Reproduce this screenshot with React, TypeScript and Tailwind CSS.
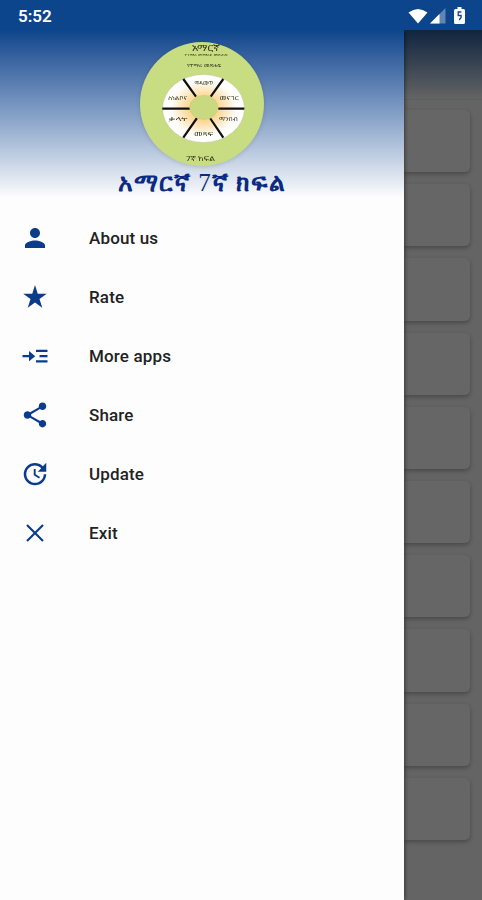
import React from "react";

const cards = Array.from({ length: 10 }, (_, index) => index);

const menuItems = [
  {
    label: "About us",
    icon: (
      <path d="M12 12c2.21 0 4-1.79 4-4s-1.79-4-4-4-4 1.79-4 4 1.79 4 4 4zm0 2c-2.67 0-8 1.34-8 4v2h16v-2c0-2.66-5.33-4-8-4z" />
    ),
  },
  {
    label: "Rate",
    icon: (
      <path d="M12 2.4l2.2 7h7.2l-5.8 4.2 2.2 7-5.8-4.3-5.8 4.3 2.2-7-5.8-4.2h7.2z" />
    ),
  },
  {
    label: "More apps",
    icon: (
      <path d="M2 11.2h5.2V8l5 4.1-5 4.1V13H2zM12.8 7H22v1.8h-9.2zM15.6 11.2H22V13h-6.4zM12.8 15.4H22v1.8h-9.2z" />
    ),
  },
  {
    label: "Share",
    icon: (
      <path d="M18 16.08c-.76 0-1.44.3-1.96.77L8.91 12.7c.05-.23.09-.46.09-.7s-.04-.47-.09-.7l7.05-4.11c.54.5 1.25.81 2.04.81 1.66 0 3-1.34 3-3s-1.34-3-3-3-3 1.34-3 3c0 .24.04.47.09.7L8.04 9.81C7.5 9.31 6.79 9 6 9c-1.66 0-3 1.34-3 3s1.34 3 3 3c.79 0 1.5-.31 2.04-.81l7.12 4.16c-.05.21-.08.43-.08.65 0 1.61 1.31 2.92 2.92 2.92s2.92-1.31 2.92-2.92-1.31-2.92-2.92-2.92z" />
    ),
  },
  {
    label: "Update",
    icon: (
      <path d="M21 10.12h-6.78l2.74-2.82c-2.73-2.7-7.15-2.8-9.88-.1-2.73 2.71-2.73 7.08 0 9.79s7.15 2.71 9.88 0C18.32 15.65 19 14.08 19 12.1h2c0 1.98-.88 4.55-2.64 6.29-3.51 3.48-9.21 3.48-12.72 0-3.5-3.47-3.53-9.11-.02-12.58s9.14-3.47 12.65 0L21 3v7.12zM12.5 8v4.25l3.5 2.08-.72 1.21L11 13V8h1.5z" />
    ),
  },
  {
    label: "Exit",
    icon: (
      <path d="M19 6.2L17.8 5 12 10.8 6.2 5 5 6.2l5.8 5.8L5 17.8 6.2 19l5.8-5.8 5.8 5.8 1.2-1.2-5.8-5.8z" />
    ),
  },
];

const wheelLabels = [
  { text: "ማዳመጥ", x: 64, y: 43 },
  { text: "ስነልቦና", x: 37.5, y: 57.5 },
  { text: "መናገር", x: 89, y: 57.5 },
  { text: "ቃላት", x: 38, y: 79 },
  { text: "ማንበብ", x: 88.5, y: 79 },
  { text: "መጻፍ", x: 63.5, y: 94 },
];

const StatusBar = () => (
  <header className="flex h-[30px] shrink-0 items-center justify-between bg-[#0c458b] pl-[18px] pr-[17px]">
    <span className="pt-[2px] text-[17px] font-semibold leading-none text-white">5:52</span>
    <div className="flex items-center pt-px">
      <svg className="h-[16px] w-[20px]" viewBox="0 0 20 16" fill="white">
        <path d="M.5 4.5Q10-2.7 19.5 4.5L10 15.5z" />
      </svg>
      <svg className="ml-[2px] h-[16px] w-[16px]" viewBox="0 0 16 16" fill="white">
        <path d="M0 15.5L15.5 0v15.5z" opacity=".35" />
        <path d="M0 15.5L9.5 6v9.5z" />
      </svg>
      <svg className="ml-[8px] h-[17px] w-[11px]" viewBox="0 0 11 17">
        <path d="M3.5 0h4v2h2q1.5 0 1.5 1.5v12Q11 17 9.5 17h-8Q0 17 0 15.5v-12Q0 2 1.5 2h2z" fill="white" />
        <path d="M7.3 5H4.2v3.5h2.9v2l-2 2.5" fill="none" stroke="#0c458b" strokeWidth="1.3" />
      </svg>
    </div>
  </header>
);

const Logo = () => (
  <svg className="h-[124px] w-[124px] drop-shadow-sm" viewBox="0 0 124 124">
    <defs>
      <radialGradient id="glow">
        <stop offset="35%" stopColor="#ffd591" />
        <stop offset="80%" stopColor="#fffdfa" />
        <stop offset="100%" stopColor="#ffffff" />
      </radialGradient>
    </defs>
    <circle cx="62" cy="62" r="62" fill="#c8dc82" />
    <ellipse cx="63.5" cy="66.5" rx="41" ry="34" fill="url(#glow)" stroke="#bfc9a0" strokeWidth=".6" />
    <path
      d="M43.3 37L56 54.7M83.3 37L70.7 54.7M22.3 66.7H50M78.3 66.7h26M43.3 95.7L57 76M83.3 95.7L70 76"
      stroke="#101010"
      strokeWidth="2.2"
    />
    <ellipse cx="63.8" cy="65.5" rx="14" ry="12" fill="#c8d97f" stroke="#d9ca7b" strokeWidth=".8" />
    <g fill="#30371f" textAnchor="middle" className="font-['Noto_Sans_Ethiopic','Noto_Sans',sans-serif]">
      <text x="65.7" y="8.6" fontSize="8.5" textLength="28" lengthAdjust="spacingAndGlyphs">አማርኛ</text>
      <text x="66" y="14" fontSize="3" textLength="43" lengthAdjust="spacingAndGlyphs">የተማሪ መማሪያ መጽሐፍ</text>
      <text x="64" y="24.5" fontSize="4.5" textLength="34" lengthAdjust="spacingAndGlyphs">የተማሪ መጽሐፍ</text>
      {wheelLabels.map((label) => (
        <text key={label.text} x={label.x} y={label.y} fontSize="5" textLength="19" lengthAdjust="spacingAndGlyphs">
          {label.text}
        </text>
      ))}
      <text x="60.5" y="118.5" fontSize="6.5" textLength="29" lengthAdjust="spacingAndGlyphs">7ኛ ክፍል</text>
    </g>
  </svg>
);

const Drawer = () => (
  <aside className="z-10 w-[404px] shrink-0 bg-[#fdfdfd] shadow-[1px_0_4px_rgba(0,0,0,0.45)]">
    <div className="flex h-[168px] flex-col items-center bg-linear-to-b from-[#0c458b] to-[#fdfdfd] pt-[12px]">
      <Logo />
      <h1 className="mt-[2px] whitespace-nowrap font-['Liberation_Serif',serif] text-[25px] font-bold leading-[30px] tracking-[1px] text-[#0b2b82]">
        አማርኛ <span className="font-normal">7</span>ኛ ክፍል
      </h1>
    </div>
    <nav className="pt-[11px]">
      {menuItems.map((item) => (
        <button key={item.label} className="flex h-[59px] w-full items-center pl-[20px] text-left">
          <svg className="mb-[2px] size-[30px] fill-[#0b3c8c]" viewBox="0 0 24 24">
            {item.icon}
          </svg>
          <span className="ml-[39px] text-[17px] font-medium tracking-[0.15px] text-[#222222]">{item.label}</span>
        </button>
      ))}
    </nav>
  </aside>
);

const App = () => {
  return (
    <div className="flex h-[900px] w-[482px] flex-col overflow-hidden bg-[#646464] font-[Roboto,sans-serif]">
      <StatusBar />
      <div className="flex min-h-0 flex-1 overflow-hidden">
        <Drawer />
        <main className="min-w-0 flex-1">
          <div className="h-[70px] border-b border-[#5c5e60] bg-linear-to-b from-[#10253f] to-[#646464]" />
          <div className="flex flex-col gap-[12px] pr-[12px] pt-[10px]">
            {cards.map((card) => (
              <div
                key={card}
                className="h-[62.2px] rounded-r-[5px] bg-[#666666] shadow-[0_2px_4px_rgba(0,0,0,0.28)]"
              />
            ))}
          </div>
        </main>
      </div>
    </div>
  );
};

export default App;
